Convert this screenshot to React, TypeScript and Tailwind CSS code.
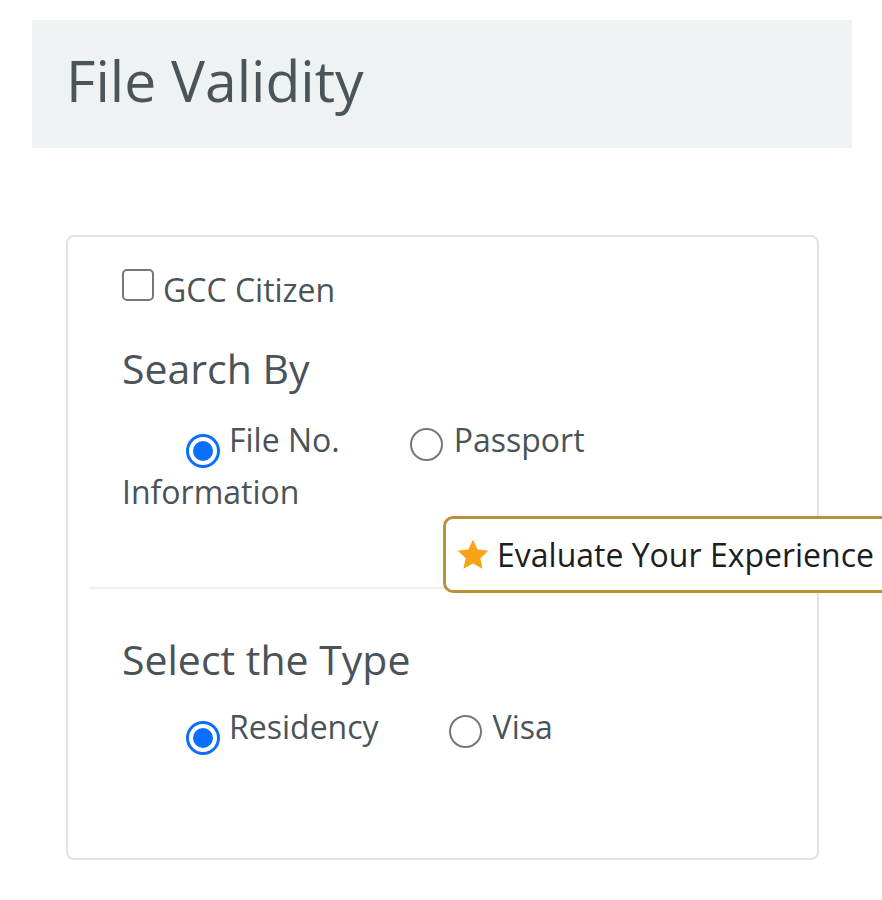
import React from "react";

function Radio({ checked }: { checked?: boolean }) {
  if (checked) {
    return (
      <span className="inline-flex items-center justify-center w-[34px] h-[34px] rounded-full border-[3px] border-[#0b6ffd] bg-white align-[-9px] mr-[9px]">
        <span className="block w-[20px] h-[20px] rounded-full bg-[#0b6ffd]" />
      </span>
    );
  }
  return (
    <span className="inline-block w-[33px] h-[33px] rounded-full border-2 border-[#777777] bg-white align-[-9px] mr-[11px]" />
  );
}

export default function App() {
  return (
    <div
      className="relative w-full h-[900px] overflow-hidden bg-white text-[#4a5358]"
      style={{ fontFamily: '"Open Sans", "Noto Sans", sans-serif' }}
    >
      <div className="pt-5">
        <div className="ml-8 w-[820px] h-[128px] bg-[#eef2f3] flex items-center pl-[34px]">
          <h1 className="text-[57px] leading-none text-[#4b5559] pb-[8px]">
            File Validity
          </h1>
        </div>

        <div className="ml-[66px] mt-[87px] w-[753px] h-[625px] border-2 border-[#e2e2e2] rounded-lg px-[21px] pt-[30px]">
          <div className="pl-[33px]">
            <label className="flex items-start gap-[9px] text-[32px] leading-[48px]">
              <span className="block mt-[2px] w-[32px] h-[32px] rounded-[5px] border-2 border-[#777777] bg-white" />
              <span className="-mt-[1px]">GCC Citizen</span>
            </label>

            <h2 className="mt-[29px] text-[41px] leading-[50px]">Search By</h2>

            <div className="mt-[23px] text-[32px] leading-[47px]">
              <span className="inline-block w-[64px]" />
              <Radio checked />
              File No.
              <span className="inline-block w-[70px]" />
              <Radio />
              Passport
              <br />
              Information
            </div>
          </div>

          <div className="mt-[72px] h-[2px] bg-[#f0f0f0]" />

          <div className="pl-[33px]">
            <h2 className="mt-[45px] text-[41px] leading-[50px]">Select the Type</h2>
            <div className="mt-[19px] text-[32px] leading-[47px]">
              <span className="inline-block w-[64px]" />
              <Radio checked />
              Residency
              <span className="inline-block w-[70px]" />
              <Radio />
              Visa
            </div>
          </div>
        </div>
      </div>

      <div className="absolute left-[443px] top-[516px] h-[77px] w-[480px] rounded-[10px] border-[3px] border-[#b8913a] bg-white flex items-center pl-[9px] gap-[6px]">
        <svg width="36" height="36" viewBox="0 0 24 24" className="shrink-0">
          <path
            d="M12 1.8l3.1 6.6 7.1.8-5.3 4.9 1.5 7.1L12 17.6l-6.4 3.6 1.5-7.1L1.8 9.2l7.1-.8z"
            fill="#f6a316"
          />
        </svg>
        <span className="text-[32px] leading-none text-[#1d1d1d] whitespace-nowrap">
          Evaluate Your Experience
        </span>
      </div>
    </div>
  );
}
